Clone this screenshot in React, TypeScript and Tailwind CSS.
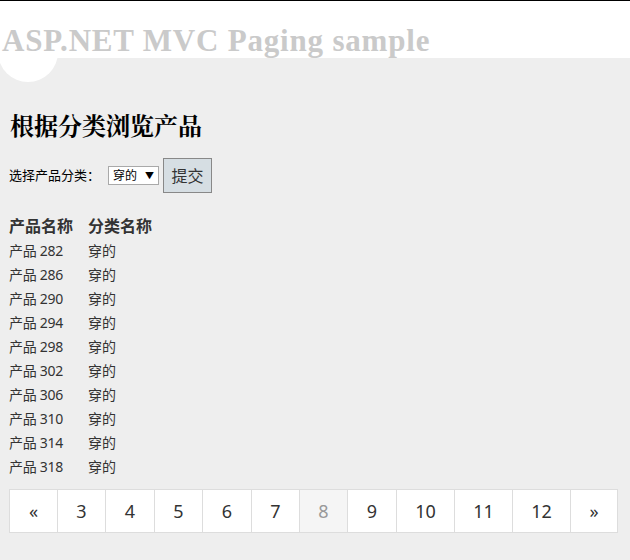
import React from 'react'

const products = [282, 286, 290, 294, 298, 302, 306, 310, 314, 318]

// page links: label, width in px, current page flag
const pages: { label: string; w: string; active?: boolean }[] = [
    { label: '«', w: 'w-[48px]' },
    { label: '3', w: 'w-[48px]' },
    { label: '4', w: 'w-[49px]' },
    { label: '5', w: 'w-[48px]' },
    { label: '6', w: 'w-[49px]' },
    { label: '7', w: 'w-[48px]' },
    { label: '8', w: 'w-[48px]', active: true },
    { label: '9', w: 'w-[49px]' },
    { label: '10', w: 'w-[58px]' },
    { label: '11', w: 'w-[58px]' },
    { label: '12', w: 'w-[58px]' },
    { label: '»', w: 'w-[48px]' },
]

const sans = "font-['Segoe_UI','Noto_Sans','Noto_Sans_CJK_SC',sans-serif]"

const App = () => {
    return (
        <div className={`relative w-[630px] h-[560px] overflow-hidden bg-[#eeeeee] ${sans} text-[#333]`}>
            <header className="relative h-[58px] bg-white border-t border-black">
                <h1 className="absolute left-[2px] top-[20px] font-['Rockwell','Liberation_Serif',serif] font-bold text-[31px] leading-[40px] tracking-[0.8px] text-[#cacaca] whitespace-nowrap z-10">
                    ASP.NET MVC Paging sample
                </h1>
            </header>
            <div className="absolute left-[-2px] top-[22px] w-[60px] h-[60px] rounded-full bg-white" />

            <main className="relative px-[9px]">
                <h2 className="mt-[51px] pl-px text-[24px] leading-[32px] font-bold text-black font-['Noto_Serif_CJK_SC','Noto_Sans_CJK_SC',serif]">
                    根据分类浏览产品
                </h2>

                <form className="mt-[17px] flex items-center text-[13px] text-black">
                    <span>选择产品分类：</span>
                    <div className="ml-[8px] flex items-center h-[19px] w-[51px] bg-white border border-[#a9a9a9] px-[4px] text-[12px] leading-none">
                        <span>穿的</span>
                        <span className="ml-auto text-[9px]">▼</span>
                    </div>
                    <button type="button" className="ml-[4px] h-[35px] w-[49px] bg-[#d6dee3] border border-[#888] text-[16px] text-[#333]">
                        提交
                    </button>
                </form>

                <table className="mt-[21px] text-[14px] border-collapse">
                    <thead>
                        <tr className="h-[24px]">
                            <th className="text-left font-bold text-[16px] pr-[15px] text-[#333]">产品名称</th>
                            <th className="text-left font-bold text-[16px] text-[#333]">分类名称</th>
                        </tr>
                    </thead>
                    <tbody>
                        {products.map(id => (
                            <tr key={id} className="h-[24px]">
                                <td className="pr-[15px] tracking-[-0.3px]">产品 {id}</td>
                                <td>穿的</td>
                            </tr>
                        ))}
                    </tbody>
                </table>

                <nav className="mt-[11px] flex">
                    {pages.map((p, i) => (
                        <span
                            key={p.label}
                            className={`${p.w} h-[44px] flex items-center justify-center border-y border-l border-[#dddddd] text-[18px] ${
                                i === pages.length - 1 ? 'border-r' : ''
                            } ${p.active ? 'bg-[#f5f5f5] text-[#999]' : 'bg-white text-[#333]'} ${
                                p.label === '«' || p.label === '»' ? 'text-[15px]' : ''
                            }`}
                        >
                            {p.label}
                        </span>
                    ))}
                </nav>
            </main>
        </div>
    )
}

export default App
